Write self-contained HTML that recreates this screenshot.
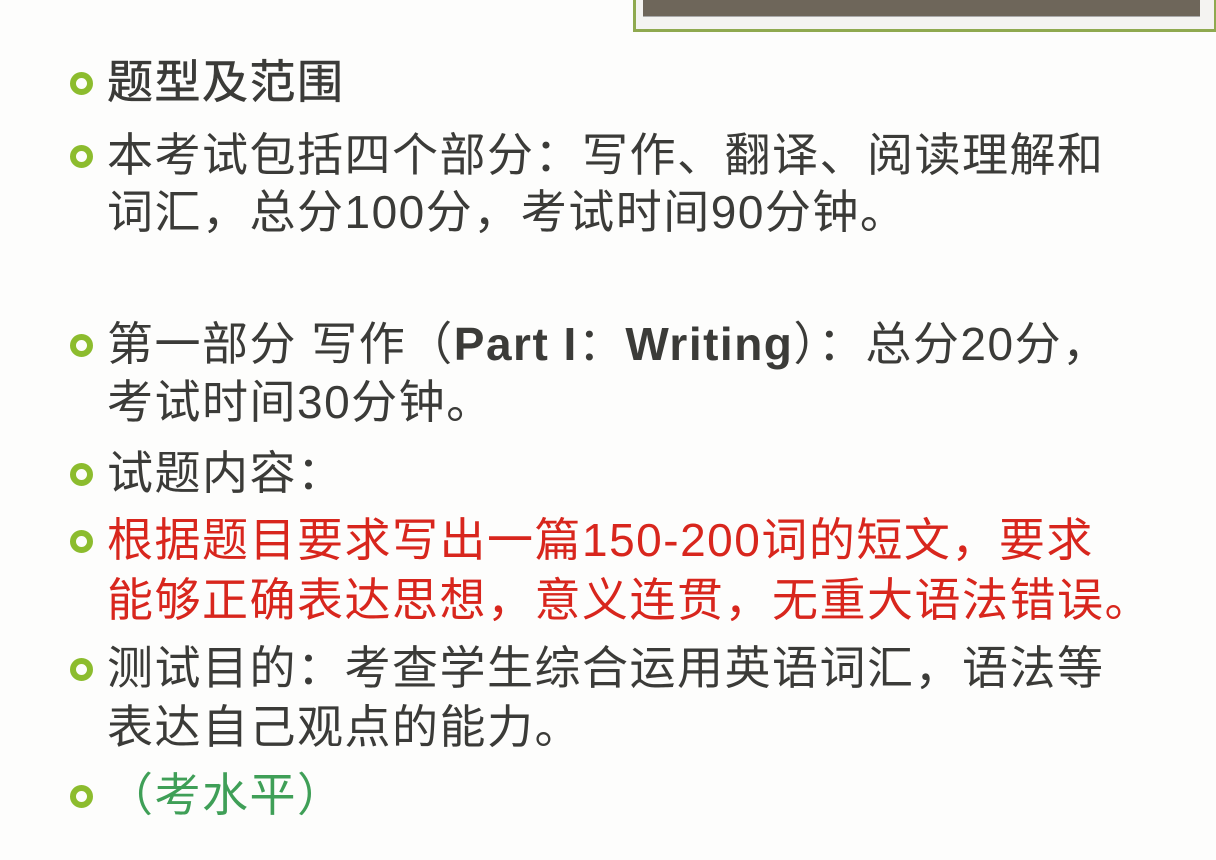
<!DOCTYPE html>
<html><head><meta charset="utf-8"><style>
html,body{margin:0;padding:0;background:#fdfdfc;width:1216px;height:860px;overflow:hidden;position:relative}
.box{position:absolute;left:633px;top:-4px;width:578px;height:30px;border:3px solid #8fa94f;background:#f4f3f1;box-sizing:content-box}
.inner{position:absolute;left:643px;top:0;width:557px;height:16px;background:#6e665a;border-bottom:1px solid #aaa}
.l{position:absolute;left:107px;font-family:"Liberation Sans","Noto Sans CJK SC",sans-serif;font-size:46px;line-height:57px;color:#3b3b38;white-space:nowrap;letter-spacing:1.5px}
.b{position:absolute;left:70px;width:11px;height:11px;border:6px solid #8cbc2e;border-radius:50%}
.r{color:#d8261d}.g{color:#3f9f57}
</style></head><body>
<div class="box"></div><div class="inner"></div>
<div class="b" style="top:72px"></div><div class="l" style="top:54px;-webkit-text-stroke:0.6px #3b3b38">题型及范围</div>
<div class="b" style="top:145px"></div><div class="l" style="top:127px">本考试包括四个部分：写作、翻译、阅读理解和</div>
<div class="l" style="top:184px">词汇，总分100分，考试时间90分钟。</div>
<div class="b" style="top:334px"></div><div class="l" style="top:316px">第一部分 写作（<b>Part I</b>：<b>Writing</b>）：总分20分，</div>
<div class="l" style="top:374px">考试时间30分钟。</div>
<div class="b" style="top:463px"></div><div class="l" style="top:445px">试题内容：</div>
<div class="b" style="top:530px"></div><div class="l r" style="top:512px">根据题目要求写出一篇150-200词的短文，要求</div>
<div class="l r" style="top:572px">能够正确表达思想，意义连贯，无重大语法错误。</div>
<div class="b" style="top:658px"></div><div class="l" style="top:640px">测试目的：考查学生综合运用英语词汇，语法等</div>
<div class="l" style="top:699px">表达自己观点的能力。</div>
<div class="b" style="top:785px"></div><div class="l g" style="top:767px">（考水平）</div>
</body></html>
